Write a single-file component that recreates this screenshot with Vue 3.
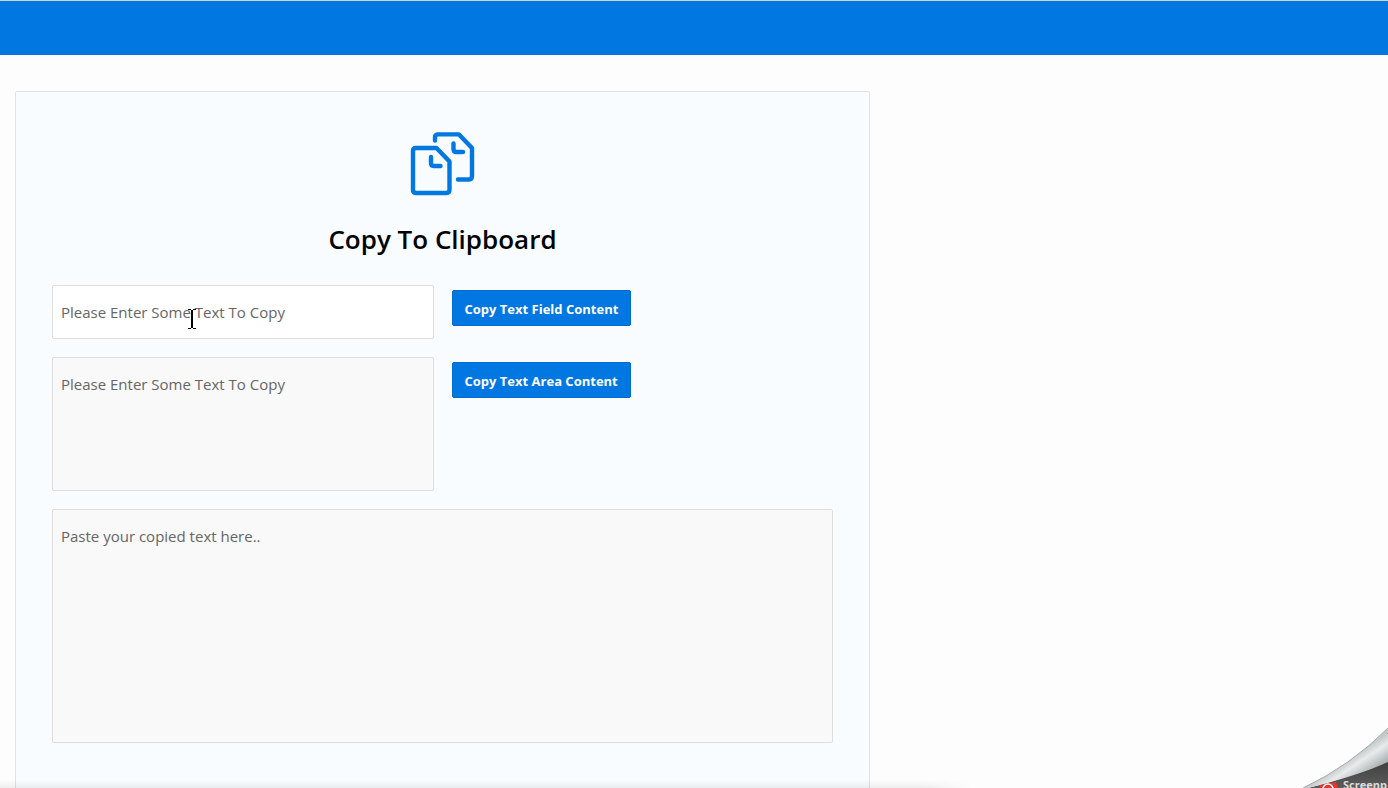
<script setup>
import { ref } from 'vue'

const fieldText = ref('')
const areaText = ref('')
const pastedText = ref('')

function copy(text) {
  navigator.clipboard?.writeText(text)
}
</script>

<template>
  <div class="page">
    <header class="topbar"></header>

    <main class="content">
      <section class="card">
        <svg class="logo" width="66" height="66" viewBox="0 0 66 66" aria-hidden="true">
          <g fill="none" stroke="currentColor" stroke-width="4.400" stroke-linecap="round" stroke-linejoin="round">
            <path d="M25 9.500V6Q25 3.400 28 3.400H49L62 17V45Q62 48.500 59 48.500H48" />
            <path d="M43.500 12.500V18Q43.500 21 46 21H53" />
            <path d="M6 17H26.500L39.500 30.500V58.500Q39.500 62 36.500 62H6Q3 62 3 59V20Q3 17 6 17Z" />
            <path d="M21 26V32Q21 35 23.500 35H30.500" />
          </g>
        </svg>
        <h1 class="title">Copy To Clipboard</h1>

        <form class="form" @submit.prevent>
          <input v-model="fieldText" class="box field" type="text" aria-label="Text field" placeholder="Please Enter Some Text To Copy" />
          <button class="btn" type="button" @click="copy(fieldText)">Copy Text Field Content</button>
          <textarea v-model="areaText" class="box area" aria-label="Text area" placeholder="Please Enter Some Text To Copy"></textarea>
          <button class="btn" type="button" @click="copy(areaText)">Copy Text Area Content</button>
          <textarea v-model="pastedText" class="box paste" aria-label="Pasted text" placeholder="Paste your copied text here.."></textarea>
        </form>
      </section>
    </main>

    <div class="bottom-shadow"></div>

    <svg class="pointer" width="8" height="20" viewBox="0 0 8 20" shape-rendering="crispEdges" aria-hidden="true">
      <path d="M0 0H3V1H5V0H8V1H5V19H8V20H5V19H3V20H0V19H3V1H0Z" fill="#000" />
    </svg>

    <svg class="curl" width="100" height="70" viewBox="0 0 100 70">
      <defs>
        <linearGradient id="fold" gradientUnits="userSpaceOnUse" x1="74" y1="32" x2="90" y2="56">
          <stop offset="0" stop-color="#c3c8c9" />
          <stop offset="0.300" stop-color="#e9ebeb" />
          <stop offset="0.600" stop-color="#c3c9ca" />
          <stop offset="1" stop-color="#949c9d" />
        </linearGradient>
        <linearGradient id="under" x1="0" y1="0" x2="0" y2="1">
          <stop offset="0" stop-color="#3f3f3f" />
          <stop offset="1" stop-color="#5c5c5c" />
        </linearGradient>
      </defs>
      <path d="M20 70Q60 60 100 43V70Z" fill="url(#under)" />
      <path d="M32 67L48 64L50 70H31Z" fill="#e4352f" />
      <circle cx="40" cy="71" r="5" fill="none" stroke="#fff" stroke-width="1.500" />
      <text class="brand" x="55" y="71">Screenp</text>
      <path d="M15 70Q62 48 100 10V44Q72 57 20 70Z" fill="url(#fold)" />
      <path d="M15 70Q62 48 100 10" fill="none" stroke="#a3a9aa" stroke-width="1" />
    </svg>
  </div>
</template>

<style>
body {
  margin: 0;
}
</style>

<style scoped>
.page {
  position: relative;
  display: flex;
  flex-direction: column;
  height: 100vh;
  overflow: hidden;
  background: #fdfdfd;
  color: #000;
  font-family: "Open Sans", "Noto Sans", sans-serif;
}
.topbar {
  flex: none;
  height: 54px;
  border-top: 1px solid #c8d5dc;
  background: #0077e1;
}
.content {
  flex: 1;
  display: grid;
  grid-template-columns: 855fr 518fr;
  padding: 36px 0 0 15px;
}
.card {
  display: flex;
  flex-direction: column;
  align-items: center;
  padding: 39px 36px 45px;
  border: 1px solid #dee2e6;
  border-bottom: 0;
  border-radius: 2px 2px 0 0;
  background: #f8fcff;
}
.logo {
  display: block;
  color: #0077e1;
}
.title {
  margin: 24px 0 27px;
  font-size: 26px;
  font-weight: 600;
  line-height: 37px;
}
.form {
  display: grid;
  grid-template-columns: 1fr 1fr;
  gap: 18px;
  align-self: stretch;
  align-items: start;
}
.box {
  display: block;
  box-sizing: border-box;
  width: 100%;
  margin: 0;
  padding: 14px 8px;
  border: 1px solid #dedede;
  border-radius: 2px;
  background: #f9f9f9;
  color: #333;
  font-family: inherit;
  font-size: 15px;
  line-height: 24px;
  resize: none;
  outline: none;
}
.box::placeholder {
  color: #666;
  opacity: 1;
}
.field {
  height: 54px;
  background: #fff;
}
.area {
  height: 134px;
}
.paste {
  grid-column: 1 / -1;
  height: 234px;
}
.btn {
  justify-self: start;
  height: 36px;
  margin: 5px 0 0;
  padding: 2px 12px 0;
  border: 1px solid #006bca;
  border-radius: 2px;
  background: #0077e1;
  color: #fff;
  font-family: inherit;
  font-size: 13px;
  font-weight: 700;
  line-height: 32px;
  white-space: nowrap;
}
.bottom-shadow {
  position: absolute;
  left: 0;
  bottom: 0;
  width: 70%;
  height: 8px;
  background: linear-gradient(to top, rgba(0, 0, 0, 0.06), rgba(0, 0, 0, 0));
  mask-image: linear-gradient(to right, #000 95%, transparent);
}
.pointer {
  position: absolute;
  left: 188px;
  top: 309px;
}
.curl {
  position: absolute;
  right: 0;
  bottom: 0;
  overflow: hidden;
}
.brand {
  fill: #dcdcdc;
  font-size: 11px;
  font-weight: 700;
}
</style>
